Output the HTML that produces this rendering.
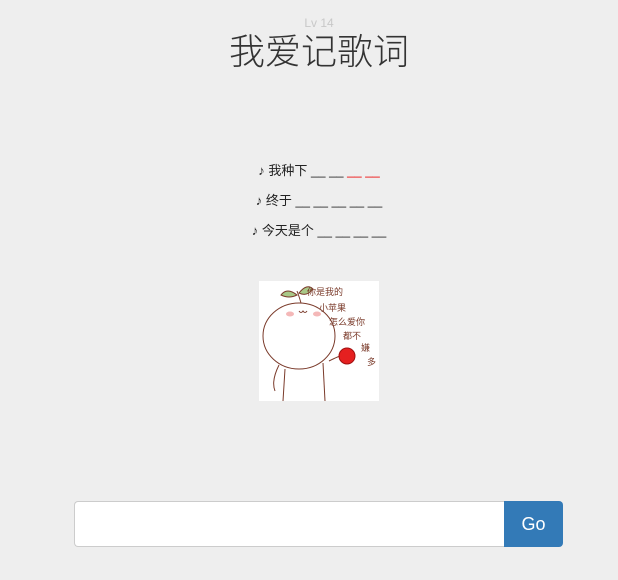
<!DOCTYPE html>
<html><head><meta charset="utf-8"><style>
body{margin:0;width:618px;height:580px;background:#eeeeee;font-family:"Liberation Sans","Noto Sans CJK SC",sans-serif;position:relative;overflow:hidden;color:#333}
.lv{position:absolute;top:16px;left:0;width:638px;text-align:center;font-size:12px;color:#c8c8c8}
.t{position:absolute;top:30px;left:0;width:638px;text-align:center;font-size:36px;line-height:44px;color:#333;font-weight:300}
.l{position:absolute;left:0;width:638px;text-align:center;font-size:13px;line-height:16px;color:#222}
.r{color:#e00}
.img{position:absolute;left:259px;top:281px;width:120px;height:120px;background:#fff}
.in{position:absolute;left:74px;top:501px;width:430px;height:44px;background:#fff;border:1px solid #ccc;border-right:none;border-radius:4px 0 0 4px}
.go{position:absolute;left:504px;top:501px;width:59px;height:46px;background:#337ab7;border-radius:0 4px 4px 0;color:#fff;font-size:18px;line-height:46px;text-align:center}
</style></head><body>
<div class="lv">Lv 14</div>
<div class="t">我爱记歌词</div>
<div class="l" style="top:163px">♪ 我种下 __ __ <span class="r">__ __</span></div>
<div class="l" style="top:193px">♪ 终于 __ __ __ __ __</div>
<div class="l" style="top:223px">♪ 今天是个 __ __ __ __</div>
<div class="img"><svg width="120" height="120" viewBox="0 0 120 120" fill="none" stroke="#7a3a2a" stroke-width="1">
<ellipse cx="40" cy="55" rx="36" ry="33"/>
<path d="M42 22 Q40 15 38 10"/><path d="M38 14 Q28 6 22 14 Q30 18 38 14Z" fill="#a8c888"/><path d="M40 12 Q48 2 54 8 Q48 16 40 12Z" fill="#a8c888"/>
<ellipse cx="31" cy="33" rx="4" ry="2.5" fill="#f4b8b8" stroke="none"/><ellipse cx="58" cy="33" rx="4" ry="2.5" fill="#f4b8b8" stroke="none"/>
<path d="M40 30 q2 3 4 0 q2 3 4 0"/>
<path d="M20 84 Q12 100 16 110"/><path d="M26 88 L24 120"/><path d="M64 82 L66 120"/><path d="M70 80 Q80 75 84 74"/>
<circle cx="88" cy="75" r="8" fill="#e52020" stroke="#a01010"/>
<text x="48" y="14" font-size="9" fill="#7a3a2a" stroke="none">你是我的</text>
<text x="60" y="30" font-size="9" fill="#7a3a2a" stroke="none">小苹果</text>
<text x="70" y="44" font-size="9" fill="#7a3a2a" stroke="none">怎么爱你</text>
<text x="84" y="58" font-size="9" fill="#7a3a2a" stroke="none">都不</text>
<text x="102" y="70" font-size="9" fill="#7a3a2a" stroke="none">嫌</text>
<text x="108" y="84" font-size="9" fill="#7a3a2a" stroke="none">多</text>
</svg></div>
<div class="in"></div>
<div class="go">Go</div>
</body></html>
